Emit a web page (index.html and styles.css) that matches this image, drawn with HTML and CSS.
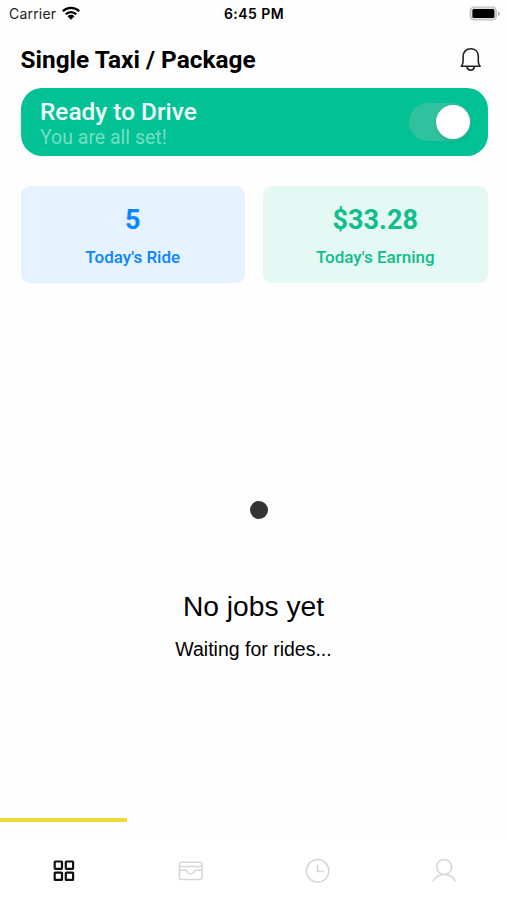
FILE: index.html
```html
<!DOCTYPE html>
<html lang="en">
<head>
  <meta charset="UTF-8">
  <title>Driver Home</title>
  <meta name="viewport" content="width=device-width, initial-scale=1.0">
  <link rel="stylesheet" href="styles.css">
</head>
<body>
  <div class="screen">

    <div class="status-bar">
      <div class="carrier">
        <span>Carrier</span>
        <svg class="wifi" width="20" height="15" viewBox="0 0 20 15">
          <path d="M1.8 5.3a11.7 11.7 0 0 1 16.4 0M4.7 8.3a7.5 7.5 0 0 1 10.6 0" fill="none" stroke="#000" stroke-width="2.3"/>
          <path d="M6.5 10.2a5 5 0 0 1 7 0L10 13.8z"/>
        </svg>
      </div>
      <div class="time">6:45 PM</div>
      <div class="status-right">
        <svg width="32" height="16" viewBox="0 0 32 16">
          <rect x="1.3" y="1" width="26" height="13" rx="4" fill="#ddd" stroke="#bbb" stroke-width="1.2"/>
          <rect x="3.4" y="3" width="22" height="9" rx="1.5"/>
          <path d="M29 5.2q4 2.3 0 4.6z" fill="#aaa"/>
        </svg>
      </div>
    </div>

    <div class="header">
      <h1>Single Taxi / Package</h1>
      <svg class="bell" width="22" height="25" viewBox="0 0 22 25" fill="none" stroke="#222" stroke-width="1.6" stroke-linejoin="round">
        <path d="M1.3 19.3c1.2-1.3 1.8-2.5 1.8-5V9.6C3.1 4.8 6.2 1.8 10.7 1.8s7.6 3 7.6 7.8v4.7c0 2.500.6 3.700 1.800 5z"/>
        <path d="M7 19.500c.4 2.500 1.700 3.700 3.700 3.700s3.300-1.200 3.700-3.700"/>
      </svg>
    </div>

    <div class="ready">
      <div class="ready-info">
        <div class="ready-title">Ready to Drive</div>
        <div class="ready-text">You are all set!</div>
      </div>
      <div class="switch"><div class="knob"></div></div>
    </div>

    <div class="stats">
      <div class="stat blue">
        <div class="value">5</div>
        <div class="label">Today's Ride</div>
      </div>
      <div class="stat green">
        <div class="value">$33.28</div>
        <div class="label">Today's Earning</div>
      </div>
    </div>

    <div class="empty">
      <div class="dot"></div>
      <div class="empty-title">No jobs yet</div>
      <div class="empty-text">Waiting for rides...</div>
    </div>

    <div class="progress"></div>

    <div class="tabs">
      <div class="tab active">
        <svg width="26" height="26" viewBox="0 0 26 26">
          <rect x="4.700" y="4.500" width="7.300" height="7.300" rx="0.500"/>
          <rect x="15.800" y="4.500" width="7.300" height="7.300" rx="0.500"/>
          <rect x="4.700" y="15.600" width="7.300" height="7.300" rx="0.500"/>
          <rect x="15.800" y="15.600" width="7.300" height="7.300" rx="0.500"/>
        </svg>
      </div>
      <div class="tab">
        <svg width="26" height="26" viewBox="0 0 26 26">
          <rect x="2.500" y="5.200" width="22.500" height="17.300" rx="2"/>
          <path d="M2.500 9.400h22.500M2.500 13.300h6.200c1.500 0 1.500 3.800 5 3.800s3.500-3.800 5-3.800h6.300"/>
        </svg>
      </div>
      <div class="tab">
        <svg width="26" height="26" viewBox="0 0 26 26">
          <circle cx="13.600" cy="13.800" r="11.200"/>
          <path d="M13.600 7.500v7h6"/>
        </svg>
      </div>
      <div class="tab">
        <svg width="26" height="26" viewBox="0 0 26 26">
          <circle cx="13.200" cy="10" r="7.500"/>
          <path d="M2 24.500c2-4.500 5.800-7 11.200-7s9.200 2.500 11.200 7"/>
        </svg>
      </div>
    </div>

  </div>
</body>
</html>
```

FILE: styles.css
```css
html, body {
  margin: 0;
  padding: 0;
  background: #fff;
  color: #000;
  font-family: Roboto, sans-serif;
  overflow: hidden;
}

.screen {
  display: flex;
  flex-direction: column;
  width: 507px;
  height: 900px;
  background: #fefefe;
}

.status-bar {
  display: grid;
  grid-template-columns: 1fr auto 1fr;
  align-items: center;
  height: 27px;
  padding: 0 6px 0 9px;
  font-family: Inter, sans-serif;
  font-size: 14px;
  line-height: 27px;
}

.carrier {
  display: flex;
  align-items: center;
  gap: 5px;
  color: #222;
  letter-spacing: 0.2px;
}

.wifi {
  margin-bottom: 1px;
}

.time {
  margin-right: 2px;
  font-weight: 600;
  letter-spacing: 0.45px;
}

.status-right {
  display: flex;
  justify-content: flex-end;
}

.header {
  display: flex;
  justify-content: space-between;
  align-items: center;
  height: 60.5px;
  padding: 0 25.5px 0 20.5px;
}

.header h1 {
  margin: 5px 0 0;
  font-size: 24.4px;
  line-height: 28px;
  font-weight: 700;
}

.bell {
  margin-top: 5px;
}

.ready {
  display: flex;
  justify-content: space-between;
  align-items: center;
  box-sizing: border-box;
  height: 68.5px;
  margin: 0 19.5px 0 20.5px;
  padding: 0 17px 0 19.5px;
  border-radius: 21px;
  background: #02c194;
}

.ready-info {
  padding-top: 5px;
}

.ready-title {
  color: #f0fffb;
  font-size: 24.4px;
  line-height: 26px;
  font-weight: 500;
}

.ready-text {
  color: #74dec4;
  font-size: 19.5px;
  line-height: 25px;
}

.switch {
  display: flex;
  justify-content: flex-end;
  align-items: center;
  width: 62px;
  height: 38px;
  border-radius: 19px;
  background: #30c29e;
}

.knob {
  width: 34px;
  height: 34px;
  margin-right: 1px;
  border-radius: 50%;
  background: #fff;
  box-shadow: 0 2px 4px rgba(0, 0, 0, 0.1);
}

.stats {
  display: grid;
  grid-template-columns: 1fr 1fr;
  gap: 18px;
  margin: 29.5px 19.5px 0 20.5px;
}

.stat {
  box-sizing: border-box;
  height: 97.5px;
  padding-top: 18px;
  border-radius: 9px;
  text-align: center;
}

.blue {
  background: #e5f2ff;
  color: #0a84ff;
}

.green {
  background: #e5f9f4;
  color: #10bd8b;
}

.value {
  font-size: 27px;
  line-height: 32px;
  font-weight: 700;
}

.label {
  margin-top: 10px;
  font-size: 17px;
  line-height: 22px;
  font-weight: 500;
}

.empty {
  display: flex;
  flex-direction: column;
  align-items: center;
  flex: 1;
  padding-top: 217.5px;
  font-family: "Liberation Sans", Arial, sans-serif;
}

.dot {
  width: 18px;
  height: 18px;
  margin-left: 10px;
  border-radius: 50%;
  background: #333;
}

.empty-title {
  margin-top: 71px;
  font-size: 28.2px;
  line-height: 32px;
}

.empty-text {
  margin-top: 16px;
  font-size: 19.5px;
  line-height: 22px;
}

.progress {
  width: 127px;
  height: 4px;
  margin-bottom: 19px;
  background: #f0d935;
}

.tabs {
  display: grid;
  grid-template-columns: repeat(4, 1fr);
  height: 59px;
  background: #fff;
}

.tab {
  display: flex;
  justify-content: center;
  padding-top: 16px;
}

.tab svg {
  fill: none;
  stroke: #d6d6d6;
  stroke-width: 1.5;
}

.active svg {
  stroke: #111;
  stroke-width: 2.2;
}
```
